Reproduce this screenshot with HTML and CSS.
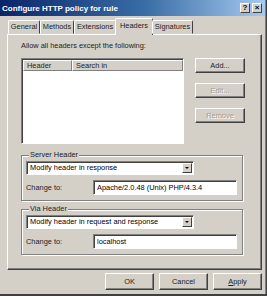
FILE: index.html
```html
<!DOCTYPE html>
<html lang="en">
<head>
    <meta charset="UTF-8">
    <title>Configure HTTP policy for rule</title>
    <link rel="stylesheet" href="styles.css">
</head>
<body>
<div class="window">
    <div class="titlebar">
        <span class="title">Configure HTTP policy for rule</span>
        <div class="caption-buttons">
            <span class="cap-btn">?</span>
            <span class="cap-btn">&#215;</span>
        </div>
    </div>
    <div class="content">
        <div class="tabs">
            <div class="tab t-general">General</div>
            <div class="tab t-methods">Methods</div>
            <div class="tab t-ext">Extensions</div>
            <div class="tab active t-headers">Headers</div>
            <div class="tab t-sig">Signatures</div>
        </div>
        <div class="panel">
            <p class="intro">Allow all headers except the following:</p>
            <div class="list-row">
                <div class="listbox">
                    <div class="list-head">
                        <span class="col col-header">Header</span>
                        <span class="col col-search">Search in</span>
                    </div>
                </div>
                <div class="side-buttons">
                    <button class="btn">Add...</button>
                    <button class="btn" disabled>Edit...</button>
                    <button class="btn" disabled>Remove</button>
                </div>
            </div>
            <div class="group">
                <span class="group-title">Server Header</span>
                <div class="select">
                    <span class="select-text">Modify header in response</span>
                    <span class="select-arrow"></span>
                </div>
                <div class="field-row">
                    <span class="field-label">Change to:</span>
                    <div class="textbox">Apache/2.0.48 (Unix) PHP/4.3.4</div>
                </div>
            </div>
            <div class="group">
                <span class="group-title">Via Header</span>
                <div class="select">
                    <span class="select-text">Modify header in request and response</span>
                    <span class="select-arrow"></span>
                </div>
                <div class="field-row">
                    <span class="field-label">Change to:</span>
                    <div class="textbox">localhost</div>
                </div>
            </div>
        </div>
        <div class="footer">
            <button class="btn btn-foot">OK</button>
            <button class="btn btn-foot">Cancel</button>
            <button class="btn btn-foot"><u>A</u>pply</button>
        </div>
    </div>
</div>
</body>
</html>
```

FILE: styles.css
```css
body {
    margin: 0;
    padding: 0;
    font-family: "Liberation Sans", Arial, sans-serif;
    font-size: 7.4px;
    color: #000;
    background: #d4d0c8;
}
.window {
    width: 267px;
    height: 296px;
    box-sizing: border-box;
    background: #d4d0c8;
    border-bottom: 2px solid #404040;
    border-right: 1px solid #404040;
    box-shadow: inset -1px 0 #808080;
    display: flex;
    flex-direction: column;
    overflow: hidden;
}
.titlebar {
    height: 16px;
    flex: none;
    display: flex;
    align-items: center;
    justify-content: space-between;
    padding: 0 3px 0 2px;
    margin-right: 1px;
    background: linear-gradient(to right, #0a246a, #3a6ea5 55%, #a6caf0);
}
.title {
    color: #fff;
    font-weight: bold;
    font-size: 8px;
}
.caption-buttons {
    display: flex;
    gap: 2px;
}
.cap-btn {
    width: 10px;
    height: 10px;
    box-sizing: border-box;
    background: #d4d0c8;
    border: 1px solid;
    border-color: #fff #404040 #404040 #fff;
    font-size: 8px;
    font-weight: bold;
    line-height: 8px;
    text-align: center;
}
.content {
    flex: 1;
    display: flex;
    flex-direction: column;
    padding: 0 4px 0 7px;
}
.tabs {
    display: flex;
    align-items: flex-end;
    height: 16px;
    margin-top: 2px;
    padding-left: 1px;
    position: relative;
    z-index: 1;
}
.tab {
    height: 14px;
    box-sizing: border-box;
    border: 1px solid;
    border-color: #fff #404040 transparent #fff;
    border-radius: 2px 2px 0 0;
    line-height: 12px;
    text-align: center;
    color: #222;
}
.t-general { width: 32px; }
.t-methods { width: 34px; }
.t-ext { width: 42px; }
.t-headers { width: 38px; }
.t-sig { width: 41px; }
.tab.active {
    height: 17px;
    margin: 0 -1px -1px -1px;
    background: #d4d0c8;
    border-bottom: none;
    line-height: 13px;
}
.panel {
    height: 236px;
    box-sizing: border-box;
    border: 1px solid;
    border-color: #fff #404040 #404040 #fff;
    box-shadow: inset -1px -1px #808080;
    padding: 5px 16px 0 13px;
}
.intro {
    margin: 0 0 7px 0;
    line-height: 11px;
    color: #222;
}
.list-row {
    display: flex;
    gap: 11px;
}
.listbox {
    width: 167px;
    height: 86px;
    box-sizing: border-box;
    background: #fff;
    border: 1px solid;
    border-color: #808080 #fff #fff #808080;
    box-shadow: inset 1px 1px #404040;
    padding: 1px 0 0 1px;
}
.list-head {
    display: flex;
    height: 11px;
}
.col {
    box-sizing: border-box;
    background: #d4d0c8;
    border: 1px solid;
    border-color: #fff #808080 #808080 #fff;
    line-height: 9px;
    padding-left: 3px;
    color: #222;
}
.col-header { width: 49px; }
.col-search { flex: 1; }
.side-buttons {
    display: flex;
    flex-direction: column;
    gap: 10px;
}
.btn {
    width: 50px;
    height: 15px;
    box-sizing: border-box;
    padding: 0;
    font-family: "Liberation Sans", Arial, sans-serif;
    font-size: 7.4px;
    color: #222;
    background: #d4d0c8;
    border: 1px solid;
    border-color: #fff #404040 #404040 #fff;
    box-shadow: inset -1px -1px #808080;
}
.btn:disabled {
    color: #a09c94;
    text-shadow: 1px 1px #fff;
}
.group {
    position: relative;
    margin-top: 11px;
    width: 222px;
    box-sizing: border-box;
    border: 1px solid #808080;
    box-shadow: inset 1px 1px #fff, 1px 1px #fff;
    padding: 5px 5px 5px 4px;
}
.group + .group {
    margin-top: 8px;
}
.group-title {
    position: absolute;
    top: -6px;
    left: 7px;
    padding: 0 1px;
    background: #d4d0c8;
    line-height: 10px;
    color: #222;
}
.select {
    display: flex;
    align-items: center;
    justify-content: space-between;
    width: 168px;
    height: 14px;
    box-sizing: border-box;
    background: #fff;
    border: 1px solid;
    border-color: #808080 #fff #fff #808080;
    box-shadow: inset 1px 1px #404040;
    padding: 1px 1px 1px 3px;
}
.select-text {
    line-height: 10px;
}
.select-arrow {
    width: 10px;
    height: 10px;
    box-sizing: border-box;
    position: relative;
    background: #d4d0c8;
    border: 1px solid;
    border-color: #fff #404040 #404040 #fff;
}
.select-arrow::after {
    content: "";
    position: absolute;
    left: 2px;
    top: 3px;
    border-left: 2px solid transparent;
    border-right: 2px solid transparent;
    border-top: 2px solid #000;
}
.field-row {
    display: flex;
    align-items: center;
    justify-content: space-between;
    margin-top: 5px;
}
.field-label {
    color: #222;
}
.textbox {
    width: 144px;
    height: 15px;
    box-sizing: border-box;
    background: #fff;
    border: 1px solid;
    border-color: #808080 #fff #fff #808080;
    box-shadow: inset 1px 1px #404040;
    padding: 0 3px;
    line-height: 13px;
}
.footer {
    display: flex;
    justify-content: flex-end;
    gap: 5px;
    margin-top: 3px;
}
.btn-foot {
    width: 49px;
    height: 17px;
}
```
